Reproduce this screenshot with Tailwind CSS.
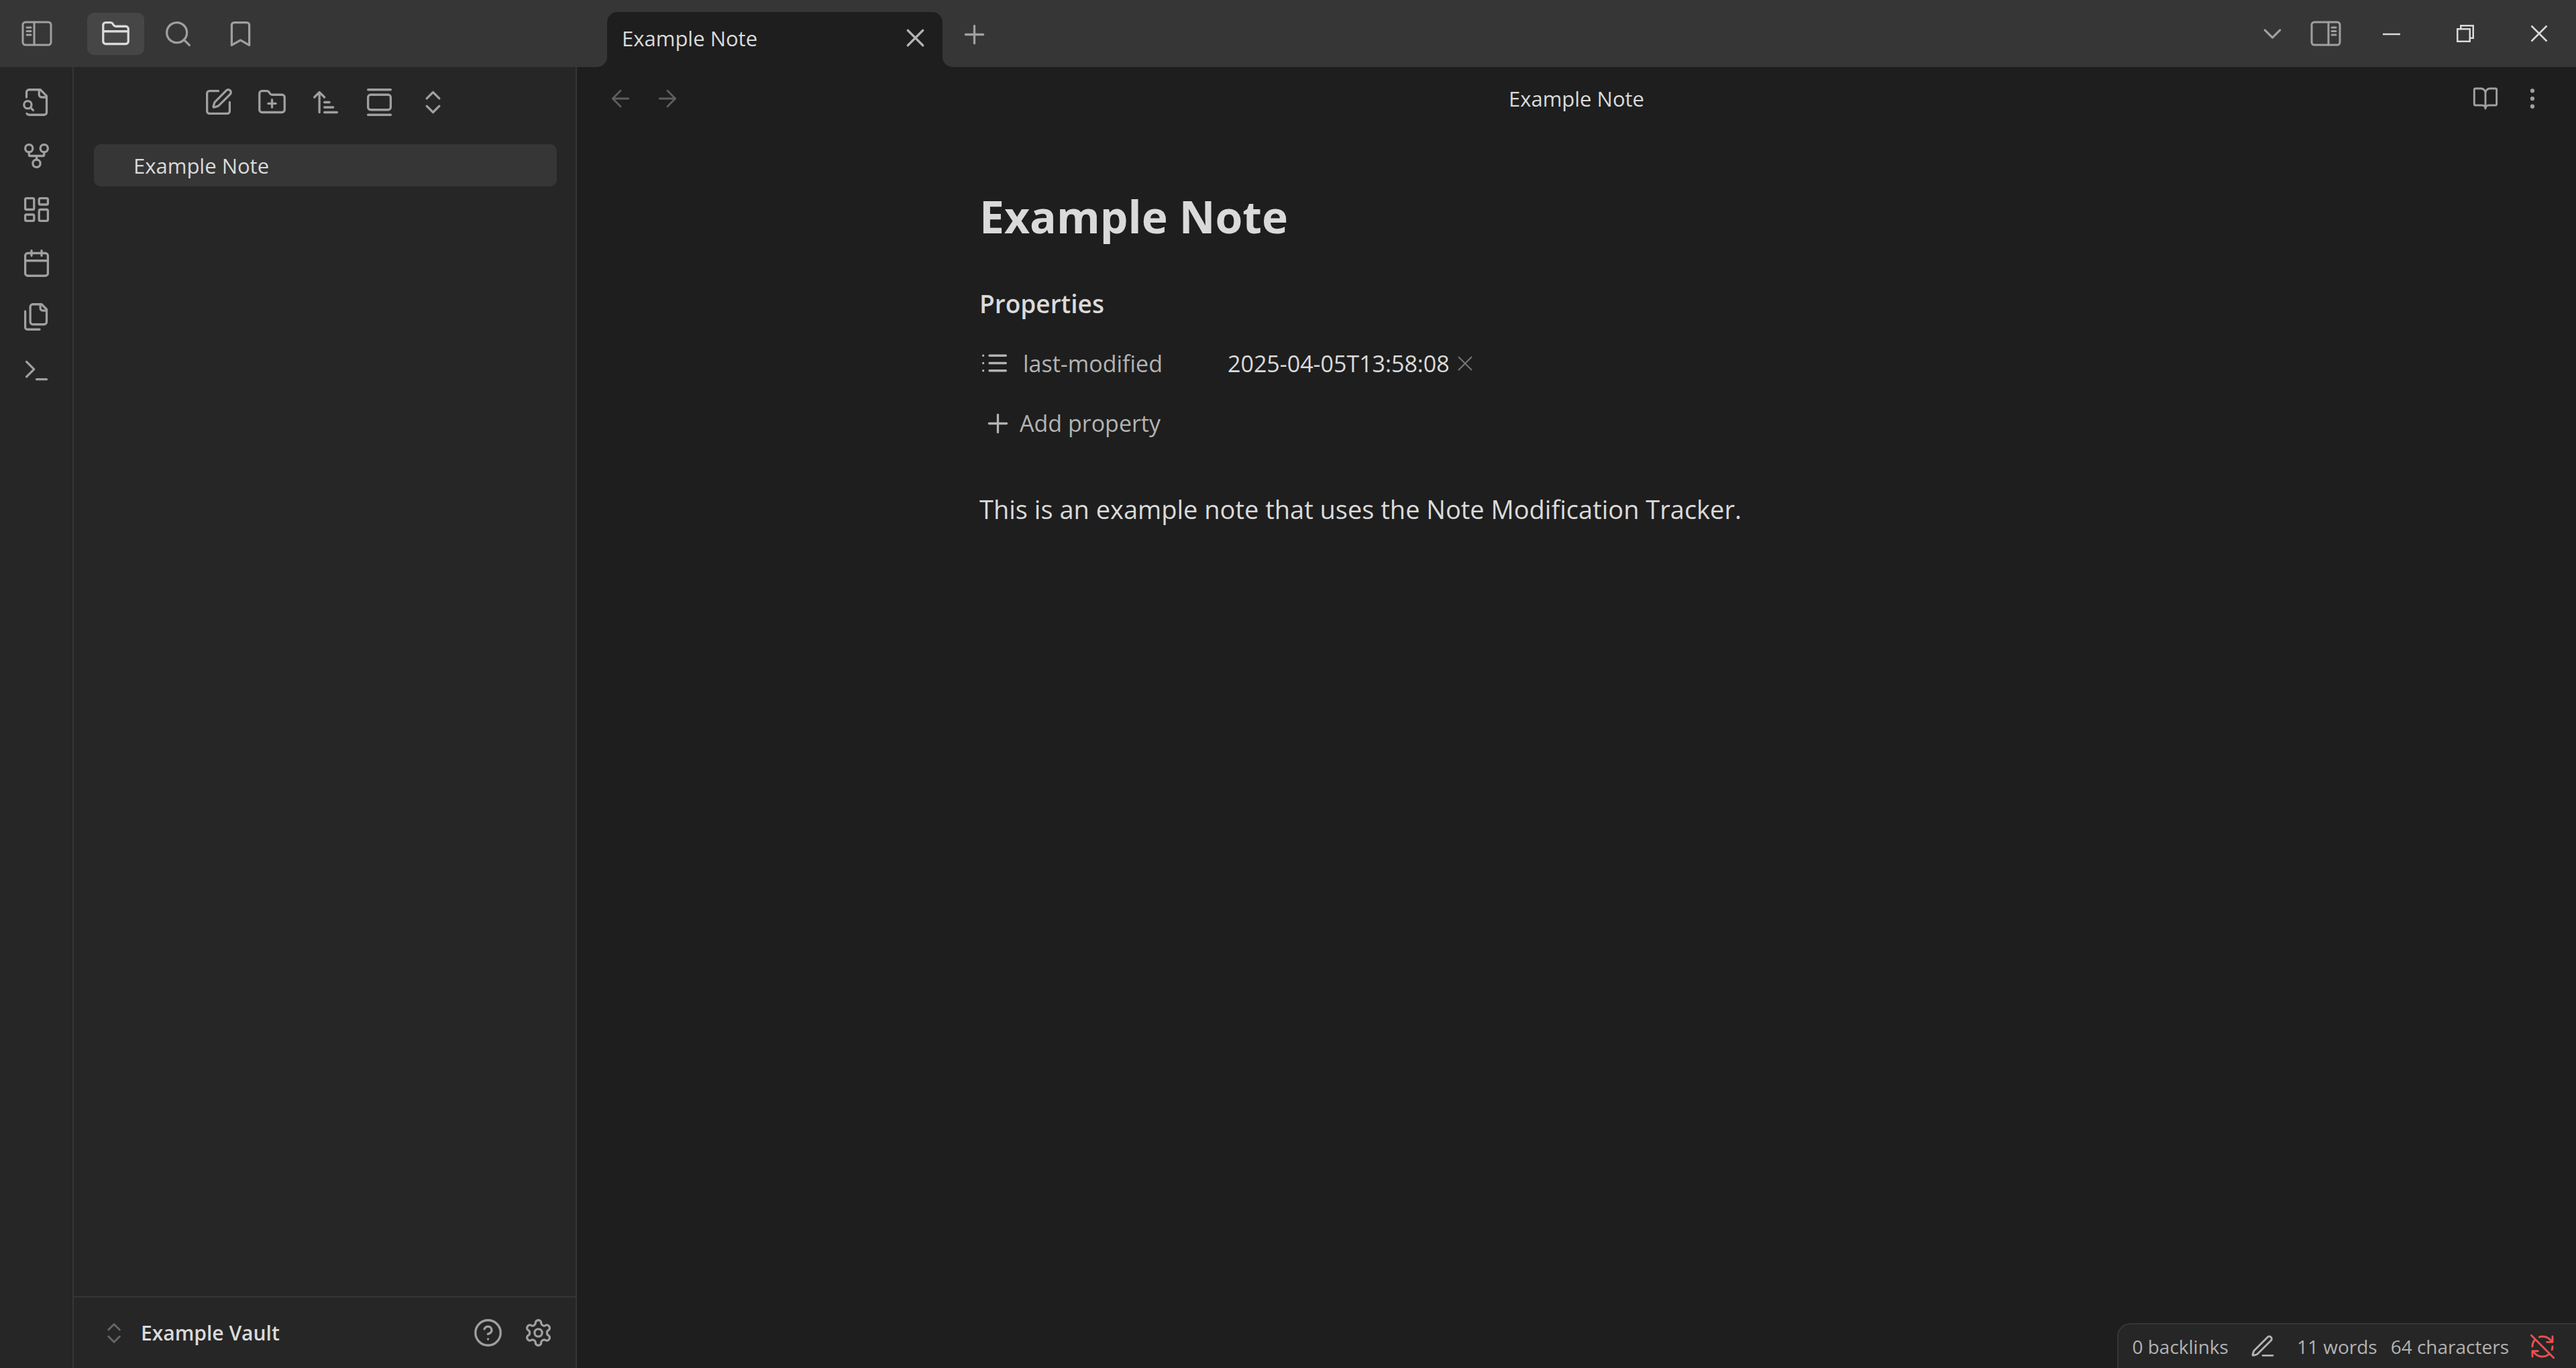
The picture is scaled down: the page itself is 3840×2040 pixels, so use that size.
<!DOCTYPE html>
<html lang="en">
<head>
<meta charset="utf-8">
<title>Example Note</title>
<script src="https://cdn.jsdelivr.net/npm/@tailwindcss/browser@4"></script>
</head>
<body class="flex h-screen flex-col overflow-hidden bg-[#1e1e1e] font-['Open_Sans','Noto_Sans',sans-serif] text-[31px] leading-[48px] text-[#dadada]">

<svg class="hidden" aria-hidden="true">
  <symbol id="plus" viewBox="0 0 24 24"><path d="M5 12h14M12 5v14"/></symbol>
  <symbol id="x" viewBox="0 0 24 24"><path d="M18 6 6 18M6 6l12 12"/></symbol>
  <symbol id="updown" viewBox="0 0 24 24"><path d="m7 15 5 5 5-5M7 9l5-5 5 5"/></symbol>
</svg>

<header class="flex h-[100px] shrink-0 bg-[#363636] text-[#a0a0a0]">
  <div class="flex w-[860px] shrink-0 items-center">
    <button aria-label="Toggle left sidebar" class="flex w-[110px] justify-center"><svg class="h-[38px] w-[46px]" viewBox="0 0 46 38" fill="none" stroke="currentColor" stroke-width="3" stroke-linecap="round"><rect x="2" y="2" width="42" height="34" rx="4"/><path d="M19 2v34M8 10h6M8 15.500h6M8 21h6"/></svg></button>
    <nav aria-label="Sidebar tabs" class="flex gap-2 pl-5">
      <button aria-label="Files" class="flex h-[63px] w-[85px] items-center justify-center rounded-[10px] bg-[#464646] text-[#dadada]"><svg class="size-[45px]" viewBox="0 0 24 24" fill="none" stroke="currentColor" stroke-width="1.750" stroke-linecap="round" stroke-linejoin="round"><path d="M20 20a2 2 0 0 0 2-2V8a2 2 0 0 0-2-2h-7.900a2 2 0 0 1-1.690-.9L9.600 3.900A2 2 0 0 0 7.930 3H4a2 2 0 0 0-2 2v13a2 2 0 0 0 2 2ZM2 10h20"/></svg></button>
      <button aria-label="Search" class="flex h-[63px] w-[85px] items-center justify-center"><svg class="size-[45px]" viewBox="0 0 24 24" fill="none" stroke="currentColor" stroke-width="1.750" stroke-linecap="round" stroke-linejoin="round"><circle cx="11" cy="11" r="8"/><path d="m21 21-4.300-4.300"/></svg></button>
      <button aria-label="Bookmarks" class="flex h-[63px] w-[85px] items-center justify-center"><svg class="size-[45px]" viewBox="0 0 24 24" fill="none" stroke="currentColor" stroke-width="1.750" stroke-linecap="round" stroke-linejoin="round"><path d="m19 21-7-4-7 4V5a2 2 0 0 1 2-2h10a2 2 0 0 1 2 2v16z"/></svg></button>
    </nav>
  </div>
  <div class="flex flex-1 items-end pl-[45px]">
    <div class="relative flex h-[82px] w-[500px] items-center justify-between rounded-t-[15px] bg-[#1e1e1e] pr-[18px] pb-[5px] pl-[22px]">
      <svg class="absolute bottom-0 -left-[15px] size-[15px]" viewBox="0 0 20 20" fill="#1e1e1e"><path d="M20 0A20 20 0 0 1 0 20h20z"/></svg>
      <svg class="absolute -right-[15px] bottom-0 size-[15px]" viewBox="0 0 20 20" fill="#1e1e1e"><path d="M0 0a20 20 0 0 0 20 20H0z"/></svg>
      <span class="text-[#dadada]">Example Note</span>
      <button aria-label="Close tab" class="text-[#b3b3b3]"><svg class="size-[45px]" fill="none" stroke="currentColor" stroke-width="1.750" stroke-linecap="round"><use href="#x"/></svg></button>
    </div>
    <button aria-label="New tab" class="mb-[26px] ml-[25px]"><svg class="size-[45px]" fill="none" stroke="currentColor" stroke-width="1.750" stroke-linecap="round"><use href="#plus"/></svg></button>
  </div>
  <div class="flex items-center">
    <button aria-label="Tab list" class="flex w-20 justify-center"><svg class="size-[45px]" viewBox="0 0 24 24" fill="none" stroke="currentColor" stroke-width="1.750" stroke-linecap="round" stroke-linejoin="round"><path d="m6 9 6 6 6-6"/></svg></button>
    <button aria-label="Toggle right sidebar" class="flex w-20 justify-center"><svg class="h-[38px] w-[46px]" viewBox="0 0 46 38" fill="none" stroke="currentColor" stroke-width="3" stroke-linecap="round"><rect x="2" y="2" width="42" height="34" rx="4"/><path d="M27 2v34M32 10h6M32 15.500h6M32 21h6"/></svg></button>
    <div class="flex pl-[3px] text-[#dadada]">
      <button aria-label="Minimize" class="flex w-[110px] justify-center"><svg class="size-[26px]" viewBox="0 0 26 26" fill="none" stroke="currentColor" stroke-width="2.500"><path d="M0 14h26"/></svg></button>
      <button aria-label="Restore" class="flex w-[110px] justify-center"><svg class="size-[26px]" viewBox="0 0 26 26" fill="none" stroke="currentColor" stroke-width="2.500"><path d="M1.250 6.250h18.500v18.500H1.250zM6.250 6V1.250h18.500v18.500H20"/></svg></button>
      <button aria-label="Close" class="flex w-[110px] justify-center"><svg class="size-[26px]" viewBox="0 0 26 26" fill="none" stroke="currentColor" stroke-width="2.500"><path d="m1.500 1.500 23 23M24.500 1.500l-23 23"/></svg></button>
    </div>
  </div>
</header>

<div class="flex min-h-0 flex-1">
  <nav aria-label="Ribbon" class="flex w-[110px] shrink-0 flex-col items-center gap-[35px] border-r-2 border-[#363636] bg-[#262626] pt-[30px] text-[#a0a0a0]">
    <button aria-label="Quick switcher"><svg class="size-[45px]" viewBox="0 0 24 24" fill="none" stroke="currentColor" stroke-width="1.750" stroke-linecap="round" stroke-linejoin="round"><path d="M14 2v4a2 2 0 0 0 2 2h4M4.268 21a2 2 0 0 0 1.727 1H18a2 2 0 0 0 2-2V7l-5-5H6a2 2 0 0 0-2 2v4M9.300 18.300l-2-2"/><circle cx="5" cy="14" r="3"/></svg></button>
    <button aria-label="Graph view"><svg class="size-[45px]" viewBox="0 0 24 24" fill="none" stroke="currentColor" stroke-width="1.750" stroke-linecap="round" stroke-linejoin="round"><circle cx="12" cy="18" r="3"/><circle cx="6" cy="6" r="3"/><circle cx="18" cy="6" r="3"/><path d="M18 9v2c0 .6-.4 1-1 1H7c-.6 0-1-.4-1-1V9M12 12v3"/></svg></button>
    <button aria-label="New canvas"><svg class="size-[45px]" viewBox="0 0 24 24" fill="none" stroke="currentColor" stroke-width="1.750" stroke-linecap="round" stroke-linejoin="round"><rect width="7" height="9" x="3" y="3" rx="1"/><rect width="7" height="5" x="14" y="3" rx="1"/><rect width="7" height="9" x="14" y="12" rx="1"/><rect width="7" height="5" x="3" y="16" rx="1"/></svg></button>
    <button aria-label="Daily note"><svg class="size-[45px]" viewBox="0 0 24 24" fill="none" stroke="currentColor" stroke-width="1.750" stroke-linecap="round" stroke-linejoin="round"><path d="M8 2v4M16 2v4M3 10h18"/><rect width="18" height="18" x="3" y="4" rx="2"/></svg></button>
    <button aria-label="Insert template"><svg class="size-[45px]" viewBox="0 0 24 24" fill="none" stroke="currentColor" stroke-width="1.750" stroke-linecap="round" stroke-linejoin="round"><path d="M20 7h-3a2 2 0 0 1-2-2V2"/><path d="M9 18a2 2 0 0 1-2-2V4a2 2 0 0 1 2-2h7l4 4v10a2 2 0 0 1-2 2Z"/><path d="M3 7.600v12.800A1.600 1.600 0 0 0 4.600 22h9.800"/></svg></button>
    <button aria-label="Command palette"><svg class="size-[45px]" viewBox="0 0 24 24" fill="none" stroke="currentColor" stroke-width="1.750" stroke-linecap="round" stroke-linejoin="round"><path d="m4 17 6-6-6-6M12 19h8"/></svg></button>
  </nav>

  <aside class="flex w-[750px] shrink-0 flex-col border-r-2 border-[#363636] bg-[#262626] text-[#a0a0a0]">
    <div class="flex justify-center gap-[35px] pt-[30px] pl-[3px]">
      <button aria-label="New note"><svg class="size-[45px]" viewBox="0 0 24 24" fill="none" stroke="currentColor" stroke-width="1.750" stroke-linecap="round" stroke-linejoin="round"><path d="M12 3H5a2 2 0 0 0-2 2v14a2 2 0 0 0 2 2h14a2 2 0 0 0 2-2v-7"/><path d="M18.375 2.625a1 1 0 0 1 3 3l-9.013 9.014a2 2 0 0 1-.853.505l-2.873.84a.5.5 0 0 1-.62-.62l.84-2.873a2 2 0 0 1 .506-.852z"/></svg></button>
      <button aria-label="New folder"><svg class="size-[45px]" viewBox="0 0 24 24" fill="none" stroke="currentColor" stroke-width="1.750" stroke-linecap="round" stroke-linejoin="round"><path d="M12 10v6M9 13h6M20 20a2 2 0 0 0 2-2V8a2 2 0 0 0-2-2h-7.900a2 2 0 0 1-1.690-.9L9.600 3.900A2 2 0 0 0 7.930 3H4a2 2 0 0 0-2 2v13a2 2 0 0 0 2 2Z"/></svg></button>
      <button aria-label="Change sort order"><svg class="size-[45px]" viewBox="0 0 24 24" fill="none" stroke="currentColor" stroke-width="1.750" stroke-linecap="round" stroke-linejoin="round"><path d="m3 8 4-4 4 4M7 4v16M11 12h4M11 16h7M11 20h10"/></svg></button>
      <button aria-label="Auto-reveal current file"><svg class="size-[45px]" viewBox="0 0 24 24" fill="none" stroke="currentColor" stroke-width="1.750" stroke-linecap="round" stroke-linejoin="round"><path d="M3 2h18"/><rect width="18" height="12" x="3" y="6" rx="2"/><path d="M3 22h18"/></svg></button>
      <button aria-label="Expand all"><svg class="size-[45px]" fill="none" stroke="currentColor" stroke-width="1.750" stroke-linecap="round" stroke-linejoin="round"><use href="#updown"/></svg></button>
    </div>
    <div class="flex-1 pt-10 pr-7 pl-[30px]">
      <a href="#note" class="flex h-[63px] items-center rounded-[10px] bg-[#363636] pl-[59px] text-[#dadada]">Example Note</a>
    </div>
    <footer class="flex h-[107px] items-center border-t-2 border-[#363636] pr-[33px] pl-10">
      <button class="flex flex-1 items-center gap-5 text-left text-[30px] font-semibold text-[#dadada]"><svg class="size-10 text-[#666]" fill="none" stroke="currentColor" stroke-width="1.750" stroke-linecap="round" stroke-linejoin="round"><use href="#updown"/></svg>Example Vault</button>
      <button aria-label="Help" class="mr-[30px]"><svg class="size-[45px]" viewBox="0 0 24 24" fill="none" stroke="currentColor" stroke-width="1.750" stroke-linecap="round" stroke-linejoin="round"><circle cx="12" cy="12" r="10"/><path d="M9.090 9a3 3 0 0 1 5.830 1c0 2-3 3-3 3M12 17h.01"/></svg></button>
      <button aria-label="Settings"><svg class="size-[45px]" viewBox="0 0 24 24" fill="none" stroke="currentColor" stroke-width="1.750" stroke-linecap="round" stroke-linejoin="round"><path d="M12.220 2h-.44a2 2 0 0 0-2 2v.18a2 2 0 0 1-1 1.730l-.43.250a2 2 0 0 1-2 0l-.15-.08a2 2 0 0 0-2.730.730l-.22.380a2 2 0 0 0 .730 2.730l.150.100a2 2 0 0 1 1 1.720v.510a2 2 0 0 1-1 1.740l-.15.090a2 2 0 0 0-.73 2.730l.220.380a2 2 0 0 0 2.730.730l.150-.08a2 2 0 0 1 2 0l.430.250a2 2 0 0 1 1 1.730V20a2 2 0 0 0 2 2h.440a2 2 0 0 0 2-2v-.18a2 2 0 0 1 1-1.730l.430-.25a2 2 0 0 1 2 0l.150.080a2 2 0 0 0 2.730-.73l.220-.39a2 2 0 0 0-.73-2.730l-.15-.08a2 2 0 0 1-1-1.740v-.5a2 2 0 0 1 1-1.740l.150-.09a2 2 0 0 0 .730-2.730l-.22-.38a2 2 0 0 0-2.730-.73l-.15.080a2 2 0 0 1-2 0l-.43-.25a2 2 0 0 1-1-1.730V4a2 2 0 0 0-2-2z"/><circle cx="12" cy="12" r="3"/></svg></button>
    </footer>
  </aside>

  <main class="relative flex min-w-0 flex-1 flex-col">
    <div class="grid h-[94px] grid-cols-3 items-center px-[45px] text-[#a0a0a0]">
      <div class="flex gap-[30px] text-[#5e5e5e]">
        <button aria-label="Back"><svg class="size-10" viewBox="0 0 24 24" fill="none" stroke="currentColor" stroke-width="1.750" stroke-linecap="round" stroke-linejoin="round"><path d="m12 19-7-7 7-7M19 12H5"/></svg></button>
        <button aria-label="Forward"><svg class="size-10" viewBox="0 0 24 24" fill="none" stroke="currentColor" stroke-width="1.750" stroke-linecap="round" stroke-linejoin="round"><path d="M5 12h14M12 5l7 7-7 7"/></svg></button>
      </div>
      <div class="text-center text-[#dadada]">Example Note</div>
      <div class="flex justify-end gap-[30px]">
        <button aria-label="Reading view"><svg class="size-10" viewBox="0 0 24 24" fill="none" stroke="currentColor" stroke-width="1.750" stroke-linecap="round" stroke-linejoin="round"><path d="M12 7v14M3 18a1 1 0 0 1-1-1V4a1 1 0 0 1 1-1h5a4 4 0 0 1 4 4 4 4 0 0 1 4-4h5a1 1 0 0 1 1 1v13a1 1 0 0 1-1 1h-6a3 3 0 0 0-3 3 3 3 0 0 0-3-3z"/></svg></button>
        <button aria-label="More options"><svg class="size-10" viewBox="0 0 24 24" fill="currentColor" stroke="currentColor" stroke-width="1.750"><circle cx="12" cy="12" r="1"/><circle cx="12" cy="5" r="1"/><circle cx="12" cy="19" r="1"/></svg></button>
      </div>
    </div>

    <article id="note" class="mx-auto w-full max-w-[1780px]">
      <h1 class="pt-[84px] text-[66px] leading-[88px] font-bold">Example Note</h1>
      <section aria-labelledby="props" class="pt-[57px] text-[34px]">
        <h2 id="props" class="text-[37px] leading-[60px] font-semibold">Properties</h2>
        <dl class="mt-[33px] flex h-[50px] items-center">
          <dt class="flex w-[370px] items-center gap-5 text-[#b3b3b3]"><svg class="size-[45px]" viewBox="0 0 24 24" fill="none" stroke="currentColor" stroke-width="1.750" stroke-linecap="round"><path d="M8 6h13M8 12h13M8 18h13M3 6h.01M3 12h.01M3 18h.01"/></svg><span class="pt-[2px]">last-modified</span></dt>
          <dd class="flex items-center gap-1 pt-[2px]">2025-04-05T13:58:08<button aria-label="Remove value" class="text-[#777]"><svg class="size-[38px]" fill="none" stroke="currentColor" stroke-width="1.250" stroke-linecap="round"><use href="#x"/></svg></button></dd>
        </dl>
        <button class="mt-10 flex h-[50px] items-center gap-[10px] pl-[5px] text-[#b3b3b3]"><svg class="size-[45px]" fill="none" stroke="currentColor" stroke-width="1.750" stroke-linecap="round"><use href="#plus"/></svg>Add property</button>
      </section>
      <p class="pt-[73px] text-[38px] leading-[60px]">This is an example note that uses the Note Modification Tracker.</p>
    </article>

    <footer class="absolute right-0 bottom-0 flex h-[67px] items-center rounded-tl-[20px] border-t-2 border-l-2 border-[#363636] bg-[#262626] pr-[30px] pl-5 text-[28px] leading-10 text-[#b3b3b3]">
      <span>0 backlinks</span>
      <button aria-label="Editing mode" class="mx-[31px]"><svg class="size-10" viewBox="0 0 24 24" fill="none" stroke="currentColor" stroke-width="1.750" stroke-linecap="round" stroke-linejoin="round"><path d="M12 20h9M16.376 3.622a1 1 0 0 1 3.002 3.002L7.368 18.635a2 2 0 0 1-.855.506l-2.872.838a.5.5 0 0 1-.62-.62l.838-2.872a2 2 0 0 1 .506-.854z"/></svg></button>
      <span class="mr-5">11 words</span>
      <span>64 characters</span>
      <button aria-label="Sync off" class="ml-[30px] text-[#e9504d]"><svg class="size-10" viewBox="0 0 24 24" fill="none" stroke="currentColor" stroke-width="1.750" stroke-linecap="round" stroke-linejoin="round"><path d="M21 8 18.740 5.740A9.750 9.750 0 0 0 12 3C11 3 10.030 3.160 9.130 3.470M8 16H3v5M3 12C3 9.510 4 7.260 5.640 5.640M3 16l2.260 2.260A9.750 9.750 0 0 0 12 21c2.490 0 4.740-1 6.360-2.640M21 12c0 1-.16 1.970-.47 2.870M21 3v5h-5M22 22 2 2"/></svg></button>
    </footer>
  </main>
</div>
</body>
</html>
